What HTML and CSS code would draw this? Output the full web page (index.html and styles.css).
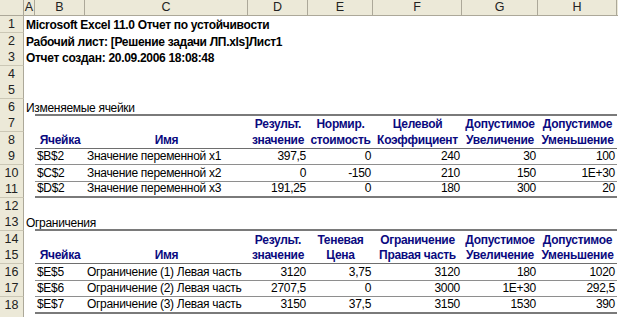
FILE: index.html
```html
<!DOCTYPE html>
<html>
<head>
<meta charset="utf-8">
<link rel="stylesheet" href="styles.css">
</head>
<body>
<div class="sheet">
  <div class="colhead">
    <div class="corner"></div>
    <div class="ch">A</div><div class="ch">B</div><div class="ch">C</div><div class="ch">D</div>
    <div class="ch">E</div><div class="ch">F</div><div class="ch">G</div><div class="ch">H</div>
  </div>

  <div class="row"><div class="rh">1</div><div class="c title">Microsoft Excel 11.0 Отчет по устойчивости</div></div>
  <div class="row"><div class="rh">2</div><div class="c title">Рабочий лист: [Решение задачи ЛП.xls]Лист1</div></div>
  <div class="row"><div class="rh">3</div><div class="c title">Отчет создан: 20.09.2006 18:08:48</div></div>
  <div class="row"><div class="rh">4</div></div>
  <div class="row"><div class="rh">5</div></div>

  <div class="row thick"><div class="rh">6</div><div class="c sec">Изменяемые ячейки</div>
    <div class="c"></div><div class="c"></div><div class="c"></div><div class="c"></div><div class="c"></div><div class="c"></div><div class="c"></div></div>
  <div class="row"><div class="rh">7</div><div class="c"></div><div class="c"></div><div class="c"></div>
    <div class="c hd">Результ.</div><div class="c hd">Нормир.</div><div class="c hd">Целевой</div><div class="c hd">Допустимое</div><div class="c hd">Допустимое</div></div>
  <div class="row head"><div class="rh">8</div><div class="c"></div>
    <div class="c hd">Ячейка</div><div class="c hd">Имя</div><div class="c hd">значение</div><div class="c hd">стоимость</div><div class="c hd">Коэффициент</div><div class="c hd">Увеличение</div><div class="c hd">Уменьшение</div></div>
  <div class="row data"><div class="rh">9</div><div class="c"></div>
    <div class="c">$B$2</div><div class="c">Значение переменной x1</div><div class="c n">397,5</div><div class="c n">0</div><div class="c n">240</div><div class="c n">30</div><div class="c n">100</div></div>
  <div class="row data"><div class="rh">10</div><div class="c"></div>
    <div class="c">$C$2</div><div class="c">Значение переменной x2</div><div class="c n">0</div><div class="c n">-150</div><div class="c n">210</div><div class="c n">150</div><div class="c n">1E+30</div></div>
  <div class="row thick"><div class="rh">11</div><div class="c"></div>
    <div class="c">$D$2</div><div class="c">Значение переменной x3</div><div class="c n">191,25</div><div class="c n">0</div><div class="c n">180</div><div class="c n">300</div><div class="c n">20</div></div>
  <div class="row"><div class="rh">12</div></div>

  <div class="row thick"><div class="rh">13</div><div class="c sec">Ограничения</div>
    <div class="c"></div><div class="c"></div><div class="c"></div><div class="c"></div><div class="c"></div><div class="c"></div><div class="c"></div></div>
  <div class="row"><div class="rh">14</div><div class="c"></div><div class="c"></div><div class="c"></div>
    <div class="c hd">Результ.</div><div class="c hd">Теневая</div><div class="c hd">Ограничение</div><div class="c hd">Допустимое</div><div class="c hd">Допустимое</div></div>
  <div class="row head"><div class="rh">15</div><div class="c"></div>
    <div class="c hd">Ячейка</div><div class="c hd">Имя</div><div class="c hd">значение</div><div class="c hd">Цена</div><div class="c hd">Правая часть</div><div class="c hd">Увеличение</div><div class="c hd">Уменьшение</div></div>
  <div class="row data"><div class="rh">16</div><div class="c"></div>
    <div class="c">$E$5</div><div class="c">Ограничение (1) Левая часть</div><div class="c n">3120</div><div class="c n">3,75</div><div class="c n">3120</div><div class="c n">180</div><div class="c n">1020</div></div>
  <div class="row data"><div class="rh">17</div><div class="c"></div>
    <div class="c">$E$6</div><div class="c">Ограничение (2) Левая часть</div><div class="c n">2707,5</div><div class="c n">0</div><div class="c n">3000</div><div class="c n">1E+30</div><div class="c n">292,5</div></div>
  <div class="row thick"><div class="rh">18</div><div class="c"></div>
    <div class="c">$E$7</div><div class="c">Ограничение (3) Левая часть</div><div class="c n">3150</div><div class="c n">37,5</div><div class="c n">3150</div><div class="c n">1530</div><div class="c n">390</div></div>
  <div class="row"><div class="rh"></div></div>
</div>
</body>
</html>
```

FILE: styles.css
```css
html, body {
  margin: 0;
  padding: 0;
  background: #ffffff;
}

.sheet {
  width: 618px;
  height: 317px;
  overflow: hidden;
  font-family: "Liberation Sans", Arial, sans-serif;
  font-size: 12px;
  letter-spacing: -0.3px;
  color: #000;
}

.colhead,
.row {
  display: grid;
  grid-template-columns: 24px 11px 50px 163px 60px 65px 89px 76px 79px;
}

.colhead {
  height: 16px;
  background: #ece9d8;
  box-sizing: border-box;
  border-bottom: 1px solid #aca899;
}

.corner {
  border-right: 1px solid #aca899;
}

.ch {
  border-right: 1px solid #aca899;
  text-align: center;
  line-height: 15px;
  font-size: 12.5px;
  letter-spacing: 0;
  color: #222;
}

.row {
  height: 16.5px;
}

.rh {
  background: #ece9d8;
  box-sizing: border-box;
  border-right: 1px solid #aca899;
  border-bottom: 1px solid #cbc7b5;
  text-align: center;
  line-height: 16px;
  font-size: 12.5px;
  letter-spacing: 0;
  color: #222;
}

.c {
  box-sizing: border-box;
  padding: 0 2px;
  white-space: nowrap;
  overflow: visible;
  display: flex;
  align-items: flex-end;
  line-height: 15px;
  min-width: 0;
}

.title {
  font-weight: bold;
}

.n {
  justify-content: flex-end;
}

.hd {
  justify-content: center;
  font-weight: bold;
  color: #0a0a80;
}

.thick > .c:not(.sec):not(:nth-child(2)) {
  border-bottom: 2px solid #7a7a7a;
}

.thick > .sec + .c {
  border-bottom: 2px solid #7a7a7a;
}

.head > .c:not(:nth-child(2)) {
  border-bottom: 1px solid #6e6e6e;
}

.data > .c:not(:nth-child(2)) {
  border-bottom: 1px solid #8e8e8e;
}
```
